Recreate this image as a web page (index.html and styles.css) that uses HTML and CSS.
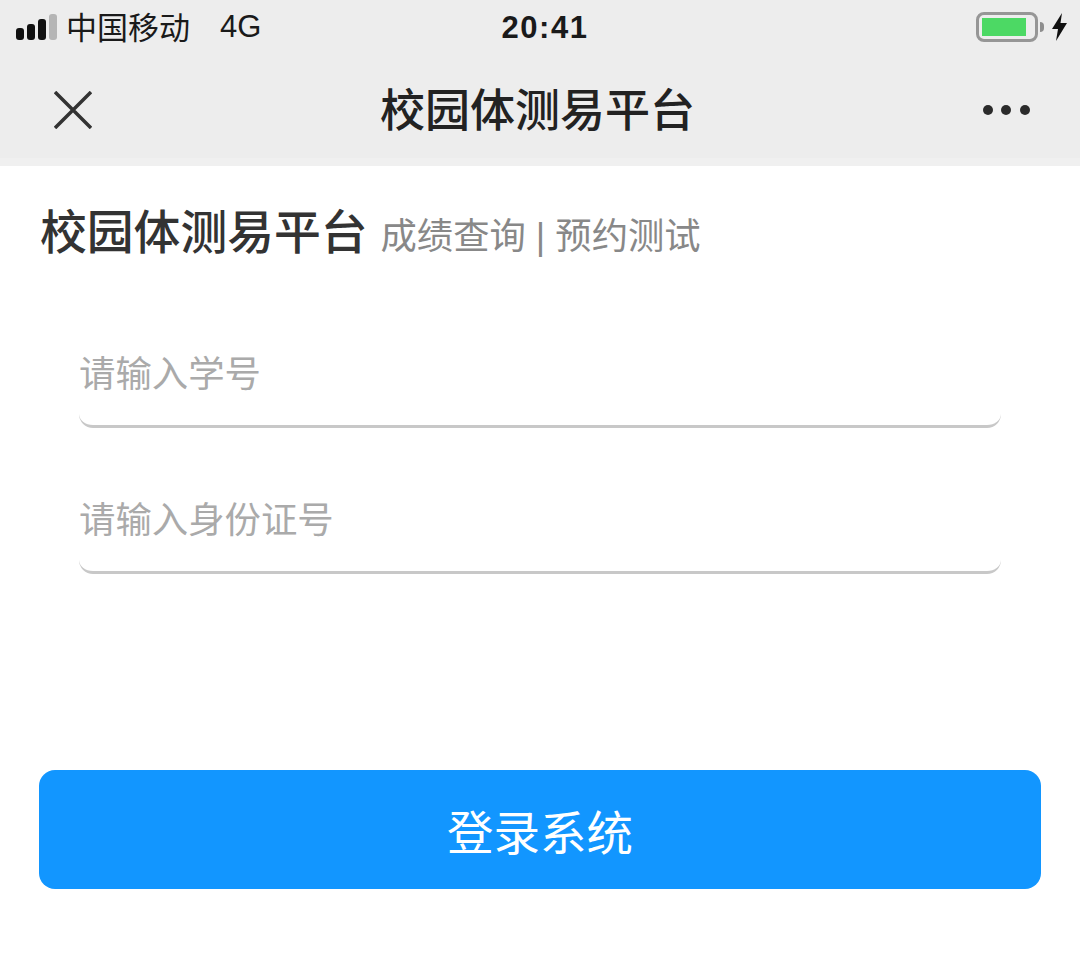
FILE: index.html
```html
<!DOCTYPE html>
<html lang="zh-CN">
<head>
    <meta charset="UTF-8">
    <meta name="viewport" content="width=device-width, initial-scale=1.0">
    <title>校园体测易平台</title>
    <link rel="stylesheet" href="styles.css">
</head>
<body>
    <!-- Phone status bar -->
    <div class="status-bar">
        <div class="status-left">
            <div class="signal">
                <span class="signal-bar bar-1"></span>
                <span class="signal-bar bar-2"></span>
                <span class="signal-bar bar-3"></span>
                <span class="signal-bar bar-4"></span>
            </div>
            <span class="carrier">中国移动</span>
            <span class="network">4G</span>
        </div>
        <div class="clock">20:41</div>
        <div class="status-right">
            <div class="battery"><div class="battery-level"></div></div>
            <div class="battery-tip"></div>
            <svg class="bolt" width="17" height="28" viewBox="0 0 17 28">
                <path d="M11 0 L1 16 H7 L5 28 L16 10 H9.500 Z" fill="#111"/>
            </svg>
        </div>
    </div>

    <!-- Nav bar -->
    <div class="nav-bar">
        <svg class="close-icon" width="38" height="38" viewBox="0 0 38 38">
            <path d="M1 1 L37 37 M37 1 L1 37" stroke="#333" stroke-width="3.500" fill="none"/>
        </svg>
        <div class="nav-title">校园体测易平台</div>
        <div class="more-icon">
            <span class="dot"></span>
            <span class="dot"></span>
            <span class="dot"></span>
        </div>
    </div>

    <div class="page">
        <div class="page-header">
            <h1>校园体测易平台</h1>
            <span class="subtitle">成绩查询 | 预约测试</span>
        </div>

        <!-- Login form -->
        <form class="login-form">
            <div class="form-fields">
                <input type="text" class="field" placeholder="请输入学号">
                <input type="text" class="field" placeholder="请输入身份证号">
            </div>
            <button type="button" class="login-btn">登录系统</button>
        </form>
    </div>
</body>
</html>
```

FILE: styles.css
```css
* {
    box-sizing: border-box;
}

body {
    margin: 0;
    background-color: #fff;
    font-family: "Liberation Sans", "Noto Sans CJK SC", sans-serif;
}

.status-bar {
    height: 54px;
    background-color: #ededed;
    padding: 0 12px 0 16px;
    display: grid;
    grid-template-columns: 1fr auto 1fr;
    align-items: center;
    color: #1a1a1a;
}

.status-left {
    display: flex;
    align-items: center;
}

.signal {
    display: flex;
    align-items: flex-end;
    gap: 3px;
    height: 26px;
    margin-right: 10px;
}

.signal-bar {
    width: 8px;
    background-color: #111;
    border-radius: 3px;
}

.bar-1 { height: 12px; }
.bar-2 { height: 16px; }
.bar-3 { height: 21px; }
.bar-4 { height: 26px; background-color: #b5b5b5; }

.carrier {
    font-size: 31px;
    margin-left: -1px;
    margin-top: -3px;
}

.network {
    font-size: 31px;
    margin-left: 30px;
}

.clock {
    font-size: 31px;
    font-weight: bold;
    letter-spacing: 1.500px;
    margin-left: 6px;
    margin-top: 2px;
}

.status-right {
    display: flex;
    align-items: center;
    justify-content: flex-end;
}

.battery {
    width: 62px;
    height: 30px;
    border: 3px solid #969696;
    border-radius: 8px;
    padding: 3px;
}

.battery-level {
    width: 44px;
    height: 18px;
    background-color: #4cd964;
}

.battery-tip {
    width: 4px;
    height: 10px;
    background-color: #8e8e8e;
    border-radius: 0 4px 4px 0;
    margin-left: 2px;
    margin-right: 7px;
}

.nav-bar {
    height: 112px;
    background-color: #ededed;
    border-bottom: 8px solid #f0f0f0;
    padding: 2px 50px 0 54px;
    display: flex;
    align-items: center;
    justify-content: space-between;
}

.close-icon {
    margin-top: 6px;
}

.nav-title {
    font-size: 45px;
    font-weight: 500;
    color: #222;
}

.more-icon {
    display: flex;
    gap: 8.500px;
    margin-top: 6px;
}

.dot {
    width: 10px;
    height: 10px;
    background-color: #2b2b2b;
    border-radius: 50%;
}

.page {
    padding: 0 39px;
}

.page-header {
    display: flex;
    align-items: baseline;
    gap: 13px;
    padding: 29px 1px 0;
}

h1 {
    margin: 0;
    font-size: 46.800px;
    font-weight: 500;
    color: #333;
}

.subtitle {
    font-size: 36.300px;
    color: #888;
}

.form-fields {
    display: flex;
    flex-direction: column;
    gap: 44px;
    padding: 0 40px;
    margin-top: 64px;
}

.field {
    display: block;
    width: 100%;
    height: 102px;
    border: none;
    border-bottom: 3px solid #c8c8c8;
    border-radius: 14px;
    outline: none;
    padding: 0 0 1px;
    background-color: #fff;
    font-family: inherit;
    font-size: 36.400px;
}

.field::placeholder {
    color: #aaa;
}

.login-btn {
    display: block;
    width: 100%;
    height: 119px;
    margin-top: 196px;
    background-color: #1296ff;
    color: white;
    border: none;
    border-radius: 16px;
    font-family: inherit;
    font-size: 46.500px;
    cursor: pointer;
}
```
